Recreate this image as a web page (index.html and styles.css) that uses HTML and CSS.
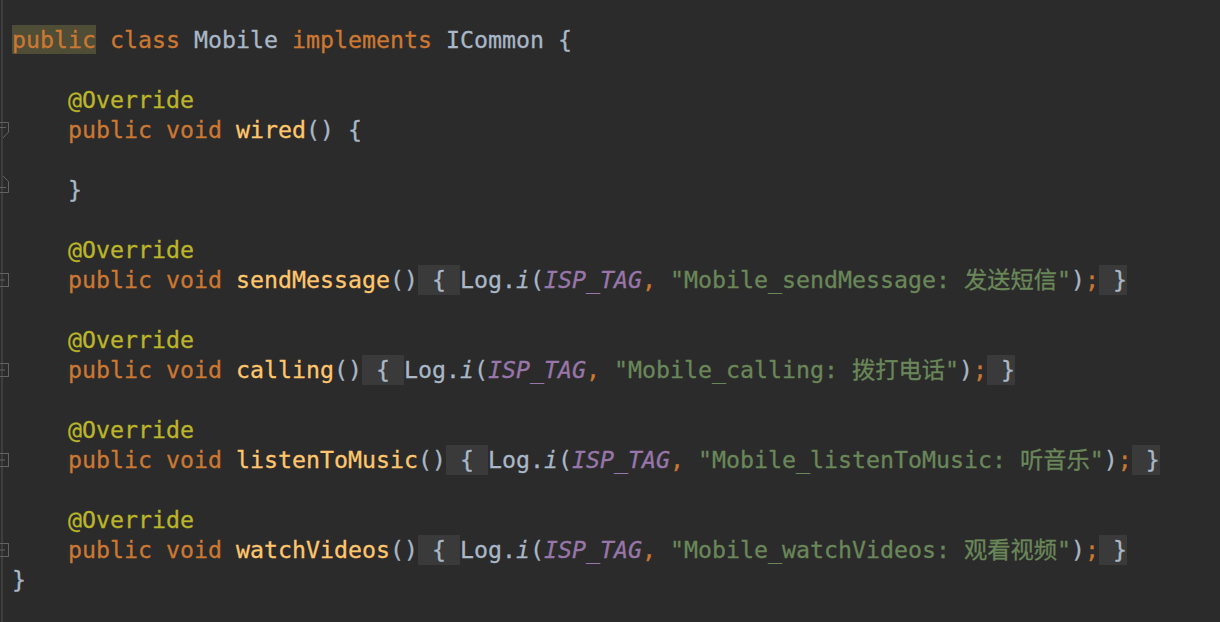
FILE: index.html
```html
<!DOCTYPE html>
<html lang="en">
<head>
    <meta charset="UTF-8">
    <title>Mobile.java</title>
    <link rel="stylesheet" href="styles.css">
</head>
<body>
    <div class="editor">
        <div class="line"><span class="gut"></span><span class="kw hl">public</span><span class="kw"> class</span> Mobile <span class="kw">implements</span> ICommon {</div>
        <div class="line"><span class="gut"></span></div>
        <div class="line"><span class="gut"></span>    <span class="ann">@Override</span></div>
        <div class="line"><span class="gut"><svg width="12" height="30"><path d="M0 7.5H8.5V17L3 23" /><path d="M0 12.5H6" /></svg></span>    <span class="kw">public void</span> <span class="fn">wired</span>() {</div>
        <div class="line"><span class="gut"></span></div>
        <div class="line"><span class="gut"><svg width="12" height="30"><path d="M3 1L8.5 6.5V17.5H0" /><path d="M0 12.5H6" /></svg></span>    }</div>
        <div class="line"><span class="gut"></span></div>
        <div class="line"><span class="gut"></span>    <span class="ann">@Override</span></div>
        <div class="line"><span class="gut"><svg width="12" height="30"><rect x="-3.5" y="8.5" width="12" height="13" /><path d="M0 15H5" /></svg></span>    <span class="kw">public void</span> <span class="fn">sendMessage</span>()<span class="fold"> { </span>Log.<span class="it">i</span>(<span class="fld">ISP_TAG</span><span class="kw">,</span> <span class="str">"Mobile_sendMessage: 发送短信"</span>)<span class="kw">;</span><span class="fold"> }</span></div>
        <div class="line"><span class="gut"></span></div>
        <div class="line"><span class="gut"></span>    <span class="ann">@Override</span></div>
        <div class="line"><span class="gut"><svg width="12" height="30"><rect x="-3.5" y="8.5" width="12" height="13" /><path d="M0 15H5" /></svg></span>    <span class="kw">public void</span> <span class="fn">calling</span>()<span class="fold"> { </span>Log.<span class="it">i</span>(<span class="fld">ISP_TAG</span><span class="kw">,</span> <span class="str">"Mobile_calling: 拨打电话"</span>)<span class="kw">;</span><span class="fold"> }</span></div>
        <div class="line"><span class="gut"></span></div>
        <div class="line"><span class="gut"></span>    <span class="ann">@Override</span></div>
        <div class="line"><span class="gut"><svg width="12" height="30"><rect x="-3.5" y="8.5" width="12" height="13" /><path d="M0 15H5" /></svg></span>    <span class="kw">public void</span> <span class="fn">listenToMusic</span>()<span class="fold"> { </span>Log.<span class="it">i</span>(<span class="fld">ISP_TAG</span><span class="kw">,</span> <span class="str">"Mobile_listenToMusic: 听音乐"</span>)<span class="kw">;</span><span class="fold"> }</span></div>
        <div class="line"><span class="gut"></span></div>
        <div class="line"><span class="gut"></span>    <span class="ann">@Override</span></div>
        <div class="line"><span class="gut"><svg width="12" height="30"><rect x="-3.5" y="8.5" width="12" height="13" /><path d="M0 15H5" /></svg></span>    <span class="kw">public void</span> <span class="fn">watchVideos</span>()<span class="fold"> { </span>Log.<span class="it">i</span>(<span class="fld">ISP_TAG</span><span class="kw">,</span> <span class="str">"Mobile_watchVideos: 观看视频"</span>)<span class="kw">;</span><span class="fold"> }</span></div>
        <div class="line"><span class="gut"></span>}</div>
    </div>
</body>
</html>
```

FILE: styles.css
```css
html, body {
    height: 100%;
}
body {
    margin: 0;
    background: linear-gradient(to right, #2b2b2b 1px, #3e3e3e 1px, #3e3e3e 3px, #2b2b2b 3px);
    background-color: #2b2b2b;
    overflow: hidden;
}
.editor {
    padding-top: 25px;
    font-family: "DejaVu Sans Mono", "Noto Sans CJK SC", monospace;
    font-size: 23.25px;
    line-height: 30px;
    color: #a9b7c6;
    -webkit-text-stroke: 0.3px currentColor;
}
.line {
    height: 30px;
    white-space: pre;
}
.gut {
    display: inline-block;
    width: 12px;
    height: 30px;
    vertical-align: top;
}
.gut svg {
    display: block;
    fill: none;
    stroke: #626262;
    stroke-width: 1;
}
.kw {
    color: #cc7832;
}
.hl {
    display: inline-block;
    background-color: #504d36;
    height: 29px;
}
.ann {
    color: #bbb529;
}
.fn {
    color: #ffc66d;
}
.str {
    color: #6a8759;
}
.fld {
    color: #9876aa;
    font-style: italic;
}
.it {
    font-style: italic;
}
.fold {
    display: inline-block;
    background-color: #3a3a3a;
    color: #a9b7c6;
}
```
